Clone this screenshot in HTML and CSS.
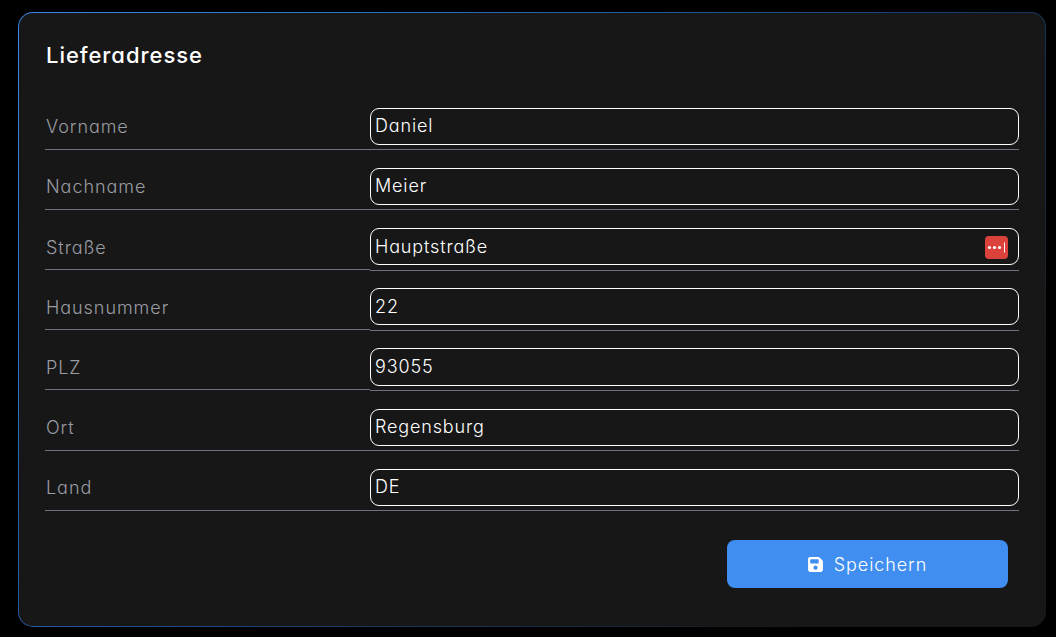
FILE: index.html
```html
<!DOCTYPE html>
<html lang="de">
<head>
    <meta charset="UTF-8">
    <meta name="viewport" content="width=device-width, initial-scale=1.0">
    <title>Lieferadresse</title>
    <link rel="stylesheet" href="styles.css">
</head>
<body>
    <div class="card">
        <h2>Lieferadresse</h2>

        <form class="address-form">
            <div class="row">
                <label for="vorname">Vorname</label>
                <div class="field"><input type="text" id="vorname" value="Daniel"></div>
            </div>
            <div class="row">
                <label for="nachname">Nachname</label>
                <div class="field"><input type="text" id="nachname" value="Meier"></div>
            </div>
            <div class="row">
                <label for="strasse">Straße</label>
                <div class="field">
                    <input type="text" id="strasse" value="Hauptstraße">
                    <span class="pw-badge">
                        <svg viewBox="0 0 23 23" width="23" height="23">
                            <circle cx="4.5" cy="11.5" r="1.6"/>
                            <circle cx="9.5" cy="11.5" r="1.6"/>
                            <circle cx="14.5" cy="11.5" r="1.6"/>
                            <rect x="19" y="6.5" width="1" height="10"/>
                        </svg>
                    </span>
                </div>
            </div>
            <div class="row">
                <label for="hausnummer">Hausnummer</label>
                <div class="field"><input type="text" id="hausnummer" value="22"></div>
            </div>
            <div class="row">
                <label for="plz">PLZ</label>
                <div class="field"><input type="text" id="plz" value="93055"></div>
            </div>
            <div class="row">
                <label for="ort">Ort</label>
                <div class="field"><input type="text" id="ort" value="Regensburg"></div>
            </div>
            <div class="row">
                <label for="land">Land</label>
                <div class="field"><input type="text" id="land" value="DE"></div>
            </div>

            <div class="actions">
                <button type="button" class="save-btn">
                    <svg viewBox="0 0 448 512" width="15" height="17">
                        <path d="M64 32C28.7 32 0 60.7 0 96V416c0 35.3 28.7 64 64 64H384c35.3 0 64-28.7 64-64V173.3c0-17-6.7-33.3-18.7-45.3L352 50.7C340 38.7 323.7 32 306.7 32H64zm0 96c0-17.7 14.3-32 32-32H288c17.7 0 32 14.3 32 32v64c0 17.7-14.3 32-32 32H96c-17.7 0-32-14.3-32-32V128zM224 288a64 64 0 1 1 0 128 64 64 0 1 1 0-128z"/>
                    </svg>
                    Speichern
                </button>
            </div>
        </form>
    </div>
</body>
</html>
```

FILE: styles.css
```css
* {
    box-sizing: border-box;
}
html {
    background: #000;
}
body {
    font-family: 'Inter', 'Lato', sans-serif;
    font-feature-settings: "cv11" 1;
    font-weight: 300;
    background: #000;
    color: #fff;
    margin: 0;
    padding: 12px 10px 10px 18px;
    height: 637px;
    overflow: hidden;
}
.card {
    height: 615px;
    padding: 26px 26px 0;
    border: 1px solid transparent;
    border-radius: 15px;
    background:
        linear-gradient(#171717, #171717) padding-box,
        linear-gradient(135deg, #3b8aeb 0%, #2a6cc0 25%, #17385f 60%, #171717 85%) border-box;
}
h2 {
    margin: 0;
    height: 51px;
    padding: 1px 0 0 1px;
    font-size: 22px;
    font-weight: 500;
    letter-spacing: 0.95px;
    line-height: 30px;
}
.row {
    display: grid;
    grid-template-columns: 325px 649px;
    height: 60.2px;
}
.row label {
    height: 59.6px;
    padding: 18.2px 0 0 1px;
    font-size: 18px;
    letter-spacing: 0.95px;
    line-height: 37px;
    color: #9a9ca3;
    border-bottom: 1px solid #6b7280;
}
.field {
    position: relative;
    height: 60.2px;
    padding-top: 17.6px;
    border-bottom: 1px solid #6b7280;
}
.field input {
    display: block;
    width: 100%;
    height: 37.2px;
    padding: 0 4px 0.8px;
    font: inherit;
    font-size: 18px;
    font-weight: 350;
    letter-spacing: 0.85px;
    color: #fff;
    background: transparent;
    border: 1px solid #fff;
    border-radius: 9px;
    outline: none;
}
.pw-badge {
    position: absolute;
    top: 25.2px;
    right: 11px;
    width: 23px;
    height: 23px;
    border-radius: 4px;
    background: #dc423c;
}
.pw-badge svg {
    display: block;
    fill: #fff;
}
.actions {
    display: flex;
    justify-content: flex-end;
    padding: 29px 11px 0 0;
}
.save-btn {
    display: flex;
    align-items: center;
    justify-content: center;
    gap: 11px;
    width: 281px;
    height: 48px;
    font: inherit;
    font-size: 18px;
    letter-spacing: 0.9px;
    color: #fff;
    background-color: #3f8ef0;
    border: none;
    border-radius: 8px;
    cursor: pointer;
}
.save-btn svg {
    fill: #fff;
}
```
